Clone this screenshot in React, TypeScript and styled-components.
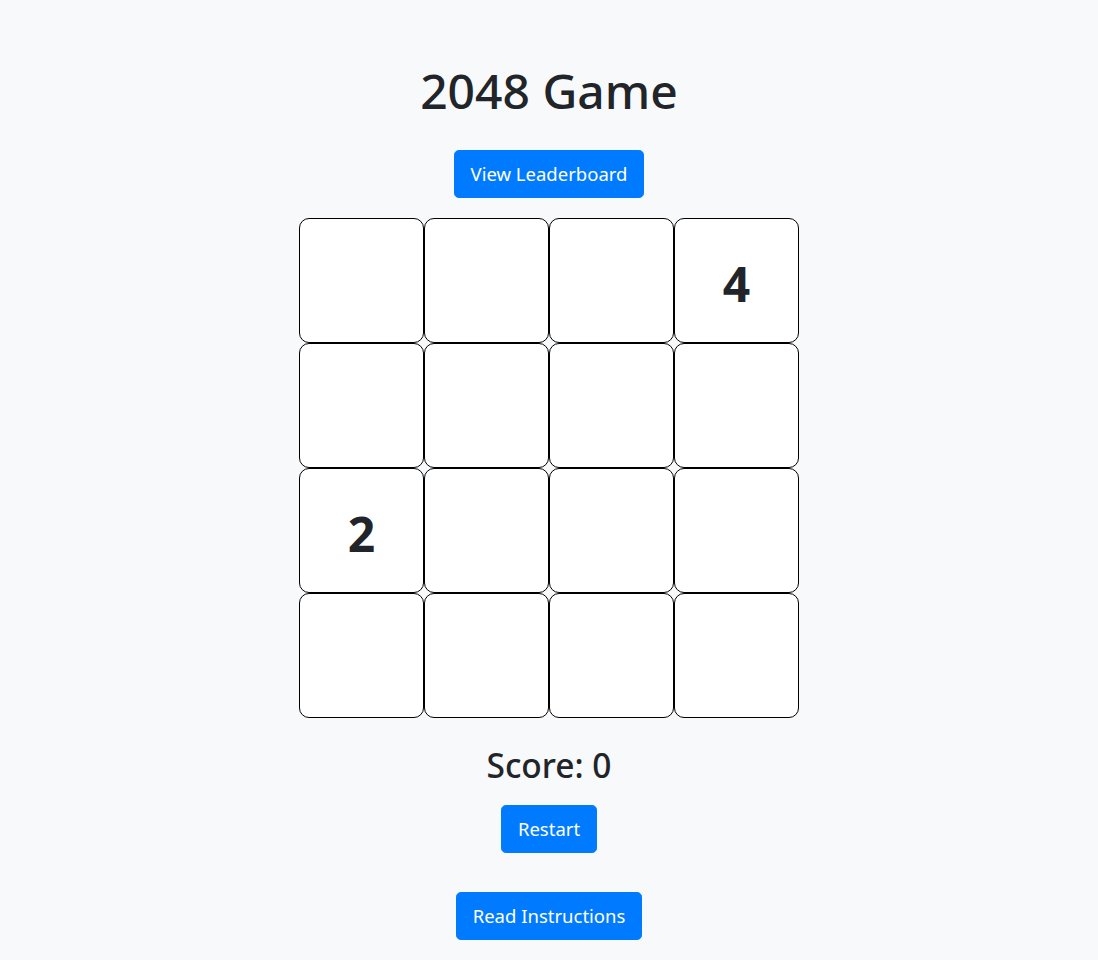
import React from "react";
import styled, { createGlobalStyle } from "styled-components";

const Global = createGlobalStyle`
  html, body { margin: 0; padding: 0; background: #f8f9fa; }
  body {
    font-family: "Noto Sans", "Open Sans", sans-serif;
    color: #212529;
    -webkit-font-smoothing: antialiased;
  }
`;

const Page = styled.div`
  display: flex;
  flex-direction: column;
  align-items: center;
  min-height: 960px;
`;

const Title = styled.h1`
  margin: 62px 0 30px;
  font-size: 48px;
  line-height: 58px;
  font-weight: 500;
`;

const Button = styled.button<{ $mt?: number }>`
  margin-top: ${(p) => p.$mt ?? 0}px;
  background: #007bff;
  color: #fff;
  border: 1px solid #007bff;
  border-radius: 4.8px;
  padding: 8px 16px;
  font-family: inherit;
  font-size: 18.5px;
  line-height: 30px;
  cursor: pointer;
`;

const Board = styled.div`
  margin-top: 20px;
  display: grid;
  grid-template-columns: repeat(4, 125px);
  grid-template-rows: repeat(4, 125px);
`;

const Cell = styled.div`
  box-sizing: border-box;
  border: 1px solid #000;
  border-radius: 10px;
  background: #fff;
  display: flex;
  align-items: center;
  justify-content: center;
  padding-top: 6px;
  font-size: 48px;
  font-weight: 700;
  color: #212529;
`;

const Score = styled.h2`
  margin: 28px 0 20px;
  font-size: 33.5px;
  line-height: 39px;
  font-weight: 500;
`;

const board = [
  [0, 0, 0, 4],
  [0, 0, 0, 0],
  [2, 0, 0, 0],
  [0, 0, 0, 0],
];

export default function App() {
  return (
    <>
      <Global />
      <Page>
        <Title>2048 Game</Title>
        <Button>View Leaderboard</Button>
        <Board>
          {board.flat().map((v, i) => (
            <Cell key={i}>{v ? v : ""}</Cell>
          ))}
        </Board>
        <Score>Score: 0</Score>
        <Button>Restart</Button>
        <Button $mt={39}>Read Instructions</Button>
      </Page>
    </>
  );
}
